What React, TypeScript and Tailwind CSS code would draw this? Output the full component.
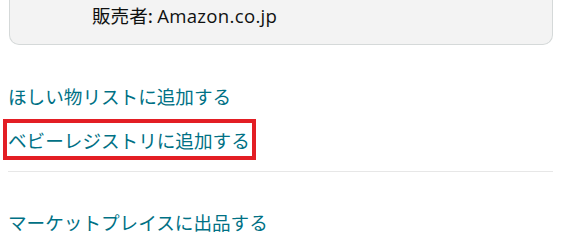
export default function App() {
  return (
    <div className="w-[561px] h-[239px] overflow-hidden bg-white font-['Noto_Sans_CJK_JP','Noto_Sans',sans-serif] text-[18.6px] leading-[24px]">
      <div className="ml-[9px] w-[544px] h-[45px] rounded-b-[10px] border-x border-b border-[#d5d9d9] bg-[#f3f3f3] pl-[82px] pt-[3px] text-[#0f1111]">
        <span>販売者: </span>
        <span className="font-['Open_Sans','Noto_Sans',sans-serif] tracking-[0.3px]">Amazon.co.jp</span>
      </div>
      <div className="pl-[8px] mt-[39px] text-[#007185]">ほしい物リストに追加する</div>
      <div className="mt-[11px] pl-[3px]">
        <div className="inline-block border-[4px] border-[#e31e24] pl-[1px] pr-[2px] pt-[5px] pb-[4px] text-[#007185]">
          ベビーレジストリに追加する
        </div>
      </div>
      <div className="ml-[8px] mr-[8px] mt-[11px] h-px bg-[#e7e7e7]" />
      <div className="pl-[8px] mt-[38px] text-[#007185]">マーケットプレイスに出品する</div>
    </div>
  );
}
